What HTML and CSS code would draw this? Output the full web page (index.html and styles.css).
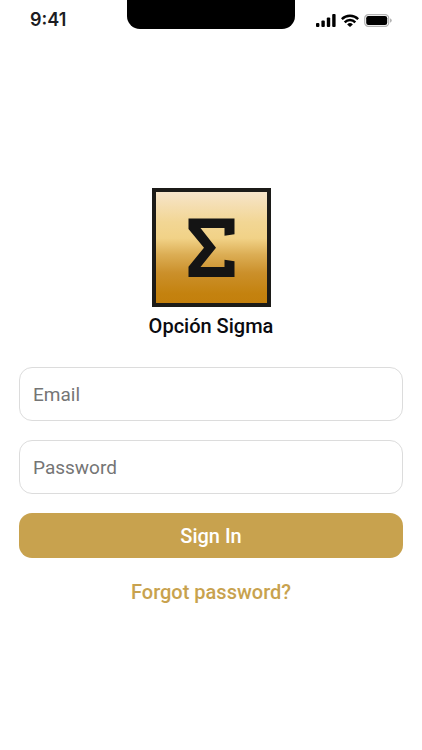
FILE: index.html
```html
<!DOCTYPE html>
<html lang="es">
<head>
  <meta charset="UTF-8" />
  <meta name="viewport" content="width=device-width, initial-scale=1.0"/>
  <title>Opción Sigma</title>
  <link rel="stylesheet" href="styles.css">
</head>
<body>
  <header class="status-bar">
    <span class="time">9:41</span>
    <div class="notch"></div>
    <div class="status-icons">
      <svg width="20" height="13" viewBox="0 0 20 13">
        <rect x="0" y="9" width="3.4" height="4" rx="1"/>
        <rect x="5.4" y="6.5" width="3.4" height="6.5" rx="1"/>
        <rect x="10.8" y="3.5" width="3.4" height="9.5" rx="1"/>
        <rect x="16.2" y="0" width="3.4" height="13" rx="1"/>
      </svg>
      <svg width="18" height="13" viewBox="0 0 18 13">
        <g fill="none" stroke="#000" stroke-width="2.5">
          <path d="M0.8 5.1 A11.6 11.6 0 0 1 17.2 5.1"/>
          <path d="M3.7 8.3 A7.5 7.5 0 0 1 14.3 8.3"/>
        </g>
        <path d="M9 13 L6.1 10.4 A4.1 4.1 0 0 1 11.9 10.4 Z"/>
      </svg>
      <svg width="28" height="13" viewBox="0 0 28 13">
        <rect x="0.7" y="0.7" width="24" height="11.6" rx="3.6" fill="#fff" stroke="#b4b4b4" stroke-width="1.2"/>
        <rect x="2.2" y="2" width="21" height="9" rx="2.2"/>
        <path d="M26 4.3 Q27.8 5.2 27.8 6.5 Q27.8 7.8 26 8.7 Z" fill="#b4b4b4"/>
      </svg>
    </div>
  </header>

  <main class="login">
    <svg class="logo" viewBox="0 0 119 119" role="img" aria-label="Opción Sigma">
      <defs>
        <linearGradient id="gold" x1="0" y1="0" x2="0" y2="1">
          <stop offset="0" stop-color="#f7e6cd"/>
          <stop offset="0.28" stop-color="#f2d694"/>
          <stop offset="0.42" stop-color="#f1d287"/>
          <stop offset="0.56" stop-color="#dcae55"/>
          <stop offset="0.72" stop-color="#cb902b"/>
          <stop offset="0.9" stop-color="#c4820f"/>
          <stop offset="1" stop-color="#c37f0c"/>
        </linearGradient>
      </defs>
      <rect x="2" y="2" width="115" height="115" fill="url(#gold)" stroke="#1c1b18" stroke-width="4"/>
      <path fill="#141414" d="M36.5 30.5 H82.5 V46.3 L72.5 47.7 V40 H48.5 L64 59.7 L48.5 79 H72.5 V71.7 L82.5 73.3 V89 H36.5 V78.7 L52 59.7 L36.5 41 Z"/>
    </svg>
    <h1>Opción Sigma</h1>
    <form class="login-form">
      <input type="email" id="email" placeholder="Email" aria-label="Email" />
      <input type="password" id="password" placeholder="Password" aria-label="Password" />
      <button type="submit">Sign In</button>
    </form>
    <a class="forgot" href="#">Forgot password?</a>
  </main>
</body>
</html>
```
FILE: styles.css
```css
* {
  box-sizing: border-box;
}

body {
  margin: 0;
  background-color: #fff;
  font-family: Roboto, "Liberation Sans", sans-serif;
  font-size: 20px;
  line-height: 24px;
  color: #0b0b0f;
}

.status-bar {
  display: grid;
  grid-template-columns: 1fr 40% 1fr;
  height: 40px;
}

.time {
  padding: 8px 0 0 30px;
  font-family: Inter, sans-serif;
  font-size: 18px;
  font-weight: 600;
  color: #1c1c22;
}

.notch {
  height: 29px;
  background-color: #000;
  border-radius: 0 0 13px 13px;
}

.status-icons {
  display: flex;
  justify-content: flex-end;
  gap: 5px;
  padding: 14px 30px 0 0;
}

.login {
  display: flex;
  flex-direction: column;
  align-items: center;
  padding: 148px 19px 0;
}

.logo {
  width: 119px;
  height: 119px;
}

h1 {
  margin: 7px 0 29px;
  font-size: 20px;
  font-weight: 500;
}

.login-form {
  display: flex;
  flex-direction: column;
  gap: 19px;
  width: 100%;
}

input {
  width: 100%;
  height: 54px;
  padding: 0 13px;
  border: 1px solid #dcdcdc;
  border-radius: 13px;
  background-color: #fff;
  font: inherit;
  font-size: 19px;
  outline: none;
}

input::placeholder {
  color: #757575;
}

input:focus {
  border-color: #c8a24e;
}

button {
  height: 45px;
  border: none;
  border-radius: 13px;
  background-color: #c8a24e;
  color: #fff;
  font: inherit;
  font-weight: 500;
  cursor: pointer;
}

.forgot {
  margin-top: 22px;
  color: #c8a24e;
  font-weight: 500;
  text-decoration: none;
}
```
